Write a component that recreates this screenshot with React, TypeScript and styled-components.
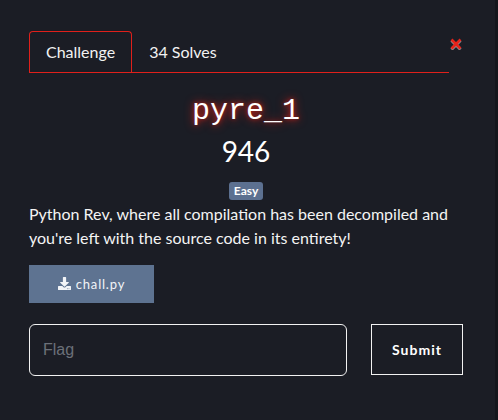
import React from "react";
import styled, { createGlobalStyle } from "styled-components";
import { FaDownload } from "react-icons/fa";

const Global = createGlobalStyle`
  html, body { margin: 0; padding: 0; background: #15171d; }
  body { font-family: Lato, "Noto Sans", sans-serif; color: #fff; }
  * { box-sizing: border-box; }
`;

const Page = styled.div`
  display: flex;
  width: 498px;
  height: 420px;
  overflow: hidden;
`;

const Modal = styled.div`
  width: 495px;
  height: 420px;
  background: #1b1d25;
  padding: 31px 32px 0 29px;
  display: flex;
  flex-direction: column;
`;

const Strip = styled.div`
  width: 3px;
  height: 420px;
  background: #14161c;
`;

const Header = styled.div`
  display: flex;
  align-items: flex-start;
`;

const Tabs = styled.div`
  flex: 1;
  display: flex;
  border-bottom: 1px solid #e0201b;
`;

const Tab = styled.div<{ $active?: boolean }>`
  padding: 8px 16px;
  font-size: 16px;
  line-height: 24px;
  color: #f2f2f2;
  border: 1px solid ${(p) => (p.$active ? "#e0201b" : "transparent")};
  border-bottom: none;
  border-radius: 4px 4px 0 0;
`;

const Close = styled.button`
  width: 14px;
  margin-top: 7px;
  padding: 0;
  border: none;
  background: none;
  display: flex;
  justify-content: center;
  cursor: pointer;
`;

const Title = styled.h1`
  margin: 20px 0 0;
  text-align: center;
  font-family: "Liberation Mono", "DejaVu Sans Mono", monospace;
  font-weight: 400;
  font-size: 30px;
  line-height: 36px;
  color: #fff;
  text-shadow: 0 0 10px rgba(225, 35, 25, 0.95), 0 0 4px rgba(200, 30, 20, 0.7);
`;

const Value = styled.h2`
  margin: 6px 0 0;
  text-align: center;
  font-weight: 400;
  font-size: 28px;
  line-height: 1.2;
  color: #fff;
`;

const BadgeRow = styled.div`
  display: flex;
  justify-content: center;
  margin-top: 13px;
`;

const Badge = styled.span`
  background: #5c7090;
  color: #fff;
  font-size: 12px;
  font-weight: 700;
  line-height: 1;
  padding: 3px 5px;
  border-radius: 3px;
`;

const Description = styled.p`
  margin: 2px 0 0;
  font-size: 16px;
  line-height: 24px;
  color: #f4f4f4;
`;

const FileButton = styled.a`
  margin-top: 15px;
  width: 125px;
  height: 38px;
  background: #5e7391;
  color: #f2f4f7;
  display: flex;
  align-items: center;
  justify-content: center;
  gap: 5px;
  font-size: 13px;
  letter-spacing: 0.8px;
  text-decoration: none;
`;

const FormRow = styled.div`
  margin-top: 21px;
  display: flex;
  align-items: flex-start;
  gap: 24px;
`;

const FlagInput = styled.input`
  width: 318px;
  height: 52px;
  border: 1px solid #f2f2f2;
  border-radius: 6px;
  background: transparent;
  padding: 0 13px;
  font-family: "Liberation Sans", Arial, sans-serif;
  font-size: 16px;
  color: #fff;
  outline: none;
  &::placeholder { color: #6b7079; }
`;

const Submit = styled.button`
  width: 92px;
  height: 51px;
  border: 1px solid #f2f2f2;
  border-radius: 0;
  background: transparent;
  color: #fff;
  font-family: Lato, sans-serif;
  font-weight: 700;
  font-size: 14px;
  letter-spacing: 1px;
  padding: 0;
`;

export default function App() {
  return (
    <>
      <Global />
      <Page>
        <Modal>
          <Header>
            <Tabs>
              <Tab $active>Challenge</Tab>
              <Tab>34 Solves</Tab>
            </Tabs>
            <Close aria-label="Close">
              <svg width="12" height="12" viewBox="0 0 12 12">
                <path d="M1.5 1.5 L10.5 10.5 M10.5 1.5 L1.5 10.5" stroke="#ffffff" strokeOpacity="0.5" strokeWidth="3" transform="translate(0,1)" />
                <path d="M1.5 1.5 L10.5 10.5 M10.5 1.5 L1.5 10.5" stroke="#e5231a" strokeWidth="2.6" />
              </svg>
            </Close>
          </Header>
          <Title>pyre_1</Title>
          <Value>946</Value>
          <BadgeRow>
            <Badge>Easy</Badge>
          </BadgeRow>
          <Description>
            Python Rev, where all compilation has been decompiled and you're left with the source code in its entirety!
          </Description>
          <FileButton href="#">
            <FaDownload size={13} />
            chall.py
          </FileButton>
          <FormRow>
            <FlagInput placeholder="Flag" />
            <Submit>Submit</Submit>
          </FormRow>
        </Modal>
        <Strip />
      </Page>
    </>
  );
}
